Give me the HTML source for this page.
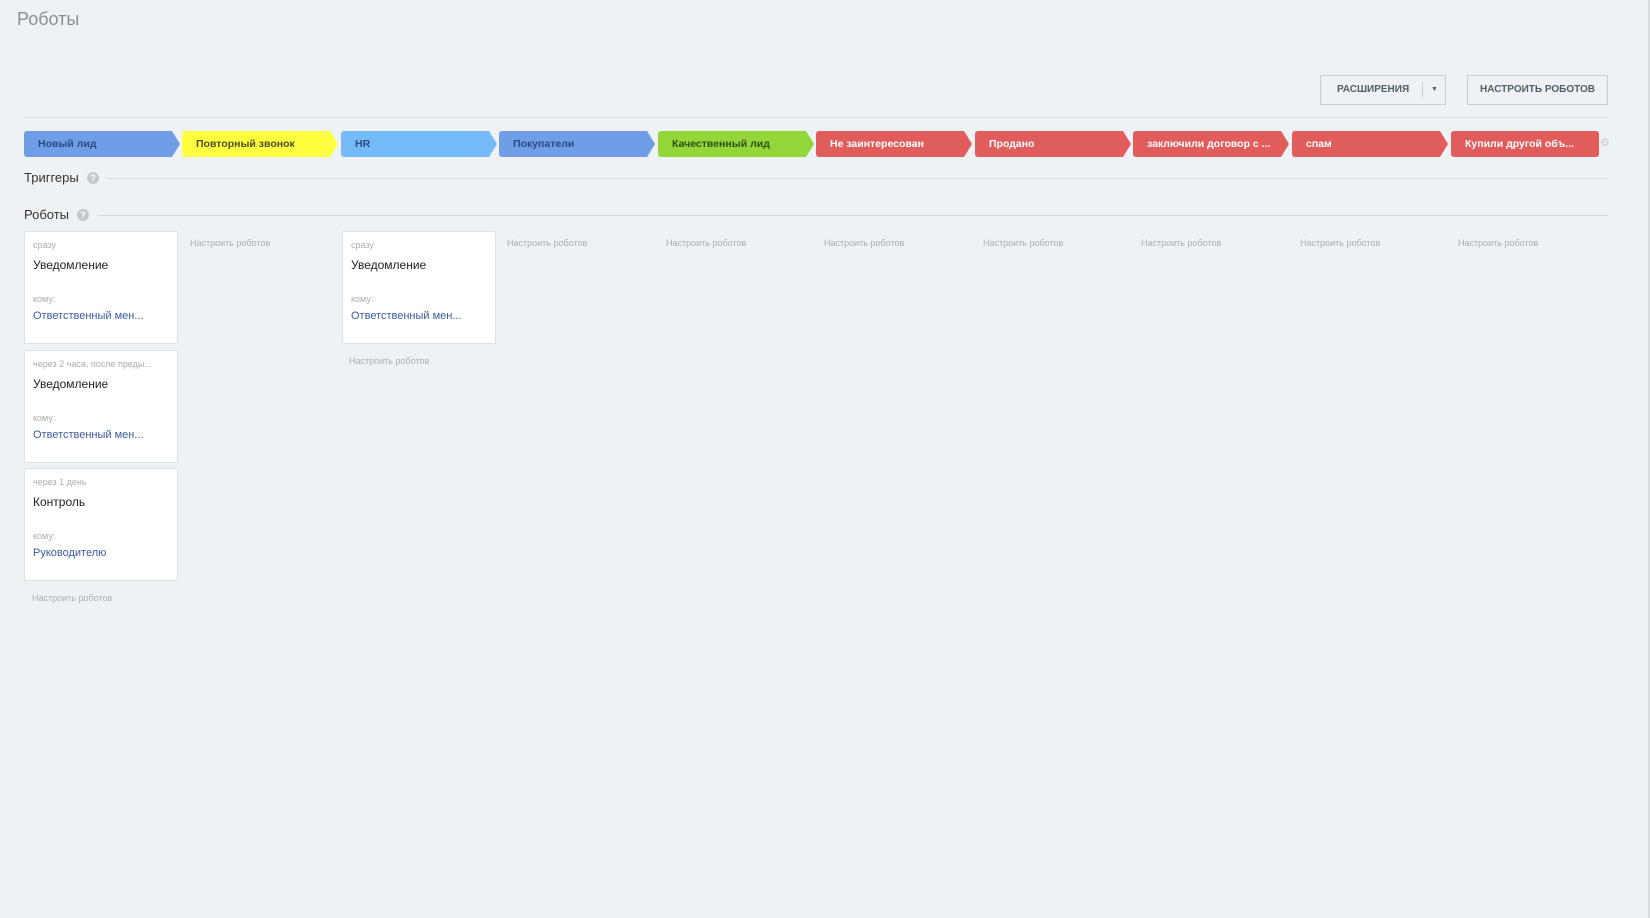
<!DOCTYPE html>
<html><head><meta charset="utf-8"><style>
*{margin:0;padding:0;box-sizing:border-box}
body{width:1650px;height:918px;background:#eef2f4;font-family:"Liberation Sans",Arial,sans-serif;position:relative;overflow:hidden}
.a{position:absolute;white-space:nowrap}
.btn{position:absolute;top:75px;height:30px;border:1px solid #c6cdd3;font-size:10px;font-weight:bold;color:#535c69;line-height:28px;text-align:center}
.st{position:absolute;top:131px;height:26px;width:156px;font-size:10.5px;font-weight:bold;line-height:26px;padding-left:14px;clip-path:polygon(0 0,148px 0,156px 13px,148px 100%,0 100%);border-radius:3px 0 0 3px}
.card{position:absolute;width:154px;height:113px;background:#fff;border:1px solid #dde2e6;border-radius:2px}
.card .t{position:absolute;left:8px;top:8px;font-size:9px;color:#a8adb3}
.card .n{position:absolute;left:8px;top:26px;font-size:12px;color:#222}
.card .k{position:absolute;left:8px;top:62px;font-size:9px;color:#a8adb3}
.card .l{position:absolute;left:8px;top:78px;font-size:11px;color:#3b5aa0}
.ln{font-size:9px;color:#a8adb3;position:absolute}
.h{position:absolute;font-size:13px;color:#333}
.q{position:absolute;width:12px;height:12px;border-radius:50%;background:#c5c9cd;color:#fff;font-size:9px;font-weight:bold;text-align:center;line-height:12px}
.hr{position:absolute;height:1px;background:#d5dade}
</style></head><body>
<div class="a" style="left:17px;top:9px;font-size:18px;color:#8a8f95">Роботы</div>
<div class="btn" style="left:1320px;width:126px;"><span style="position:absolute;left:16px">РАСШИРЕНИЯ</span><span style="position:absolute;left:101px;top:6px;width:1px;height:16px;background:#c6cdd3"></span><span style="position:absolute;left:110px;top:0;font-size:7px">▼</span></div>
<div class="btn" style="left:1467px;width:141px;">НАСТРОИТЬ РОБОТОВ</div>
<div class="hr" style="left:24px;top:117px;width:1584px"></div>

<div class="st" style="left:24px;background:#6d9ee6;color:#2c4b7d">Новый лид</div>
<div class="st" style="left:182px;background:#ffff40;color:#4d4d20">Повторный звонок</div>
<div class="st" style="left:341px;background:#73baf6;color:#2c4b7d">HR</div>
<div class="st" style="left:499px;background:#6d9ee6;color:#2c4b7d">Покупатели</div>
<div class="st" style="left:658px;background:#93d63a;color:#2f4f12">Качественный лид</div>
<div class="st" style="left:816px;background:#e05d5c;color:#fff">Не заинтересован</div>
<div class="st" style="left:975px;background:#e05d5c;color:#fff">Продано</div>
<div class="st" style="left:1133px;background:#e05d5c;color:#fff">заключили договор с ...</div>
<div class="st" style="left:1292px;background:#e05d5c;color:#fff">спам</div>
<div class="st" style="left:1451px;width:148px;background:#e05d5c;color:#fff;clip-path:none;border-radius:3px">Купили другой объ...</div>
<div class="a" style="left:1600px;top:136px;font-size:11px;color:#c8ccd0">⚙</div>

<div class="h" style="left:24px;top:170px">Триггеры</div>
<div class="q" style="left:87px;top:172px">?</div>
<div class="hr" style="left:106px;top:178px;width:1502px"></div>
<div class="h" style="left:24px;top:207px">Роботы</div>
<div class="q" style="left:77px;top:209px">?</div>
<div class="hr" style="left:97px;top:215px;width:1511px"></div>

<div class="card" style="left:24px;top:231px"><div class="t">сразу</div><div class="n">Уведомление</div><div class="k">кому:</div><div class="l">Ответственный мен...</div></div>
<div class="card" style="left:24px;top:350px"><div class="t">через 2 часа, после преды...</div><div class="n">Уведомление</div><div class="k">кому:</div><div class="l">Ответственный мен...</div></div>
<div class="card" style="left:24px;top:468px"><div class="t">через 1 день</div><div class="n">Контроль</div><div class="k">кому:</div><div class="l">Руководителю</div></div>
<div class="ln" style="left:32px;top:593px">Настроить роботов</div>

<div class="card" style="left:342px;top:231px"><div class="t">сразу</div><div class="n">Уведомление</div><div class="k">кому:</div><div class="l">Ответственный мен...</div></div>
<div class="ln" style="left:349px;top:356px">Настроить роботов</div>

<div class="ln" style="left:190px;top:238px">Настроить роботов</div>
<div class="ln" style="left:507px;top:238px">Настроить роботов</div>
<div class="ln" style="left:666px;top:238px">Настроить роботов</div>
<div class="ln" style="left:824px;top:238px">Настроить роботов</div>
<div class="ln" style="left:983px;top:238px">Настроить роботов</div>
<div class="ln" style="left:1141px;top:238px">Настроить роботов</div>
<div class="ln" style="left:1300px;top:238px">Настроить роботов</div>
<div class="ln" style="left:1458px;top:238px">Настроить роботов</div>

<div class="a" style="left:1648px;top:0;width:2px;height:918px;background:#d8dcdf"></div>
</body></html>
